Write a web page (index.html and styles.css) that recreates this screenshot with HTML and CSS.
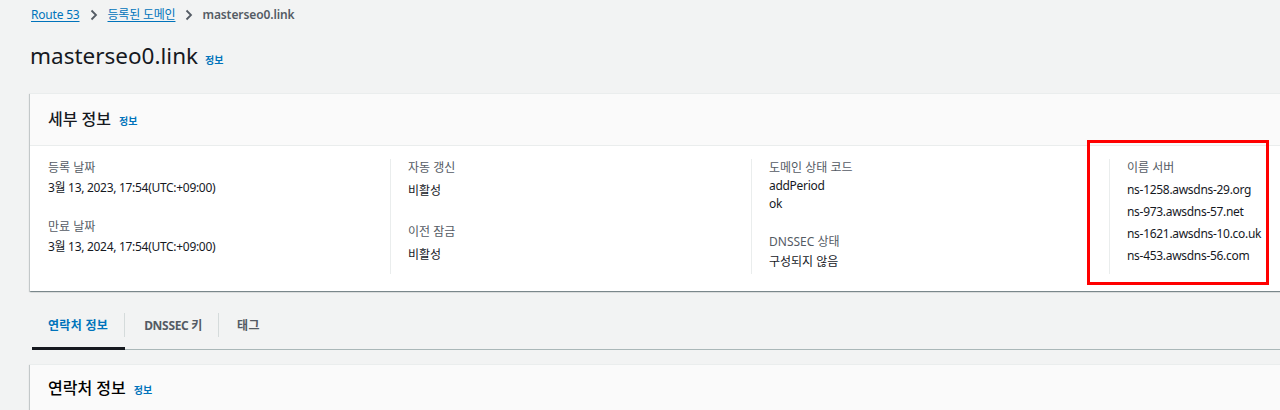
FILE: index.html
```html
<!DOCTYPE html>
<html lang="ko">
<head>
<meta charset="utf-8">
<title>masterseo0.link</title>
<link rel="stylesheet" href="styles.css">
</head>
<body>
<div class="page">
  <nav class="breadcrumb">
    <a class="crumb-link" href="#">Route 53</a>
    <svg class="chev" width="8" height="12" viewBox="0 0 8 12"><path d="M1.5 1.5 L6 6 L1.5 10.5" fill="none" stroke="#545b64" stroke-width="1.8"/></svg>
    <a class="crumb-link" href="#">등록된 도메인</a>
    <svg class="chev" width="8" height="12" viewBox="0 0 8 12"><path d="M1.5 1.5 L6 6 L1.5 10.5" fill="none" stroke="#545b64" stroke-width="1.8"/></svg>
    <span class="crumb-current">masterseo0.link</span>
  </nav>

  <h1 class="page-title">masterseo0.link <a class="info" href="#">정보</a></h1>

  <section class="card">
    <header class="card-header">
      <h2 class="card-title">세부 정보 <a class="info" href="#">정보</a></h2>
    </header>
    <div class="card-body">
      <div class="col col-first">
        <div class="kv">
          <div class="label">등록 날짜</div>
          <div class="value latin">3월 13, 2023, 17:54(UTC:+09:00)</div>
        </div>
        <div class="kv">
          <div class="label">만료 날짜</div>
          <div class="value latin">3월 13, 2024, 17:54(UTC:+09:00)</div>
        </div>
      </div>
      <div class="col col-two">
        <div class="kv">
          <div class="label">자동 갱신</div>
          <div class="value">비활성</div>
        </div>
        <div class="kv">
          <div class="label">이전 잠금</div>
          <div class="value">비활성</div>
        </div>
      </div>
      <div class="col col-three">
        <div class="kv">
          <div class="label">도메인 상태 코드</div>
          <div class="value tight latin">addPeriod</div>
          <div class="value tight latin">ok</div>
        </div>
        <div class="kv">
          <div class="label">DNSSEC 상태</div>
          <div class="value">구성되지 않음</div>
        </div>
      </div>
      <div class="col col-four">
        <div class="kv">
          <div class="label">이름 서버</div>
          <div class="ns-list">
            <div class="value ns latin">ns-1258.awsdns-29.org</div>
            <div class="value ns latin">ns-973.awsdns-57.net</div>
            <div class="value ns latin">ns-1621.awsdns-10.co.uk</div>
            <div class="value ns latin">ns-453.awsdns-56.com</div>
          </div>
        </div>
      </div>
    </div>
  </section>

  <div class="tabs">
    <a class="tab active" href="#">연락처 정보</a>
    <a class="tab second" href="#">DNSSEC 키</a>
    <a class="tab last" href="#">태그</a>
  </div>

  <section class="card card-second">
    <header class="card-header">
      <h2 class="card-title dark">연락처 정보 <a class="info" href="#">정보</a></h2>
    </header>
  </section>
</div>
<div class="highlight"></div>
</body>
</html>
```

FILE: styles.css
```css
html, body {
  margin: 0;
  padding: 0;
}
body {
  background: #f2f3f3;
  font-family: "Noto Sans", "Noto Sans CJK KR", sans-serif;
  color: #16191f;
  width: 1280px;
  height: 410px;
  overflow: hidden;
  position: relative;
}
.page {
  padding-left: 30px;
}
.breadcrumb {
  display: flex;
  align-items: center;
  height: 16px;
  padding-top: 7px;
  font-size: 12px;
  line-height: 16px;
}
.crumb-link {
  color: #0073bb;
  text-decoration: underline;
  text-underline-offset: 2px;
  margin-left: 1px;
  letter-spacing: -0.2px;
}
.chev {
  margin: 0 9px 0 10px;
}
.crumb-current {
  color: #545b64;
  font-weight: 600;
  letter-spacing: -0.1px;
}
.page-title {
  margin: 19px 0 0 0;
  font-size: 22.5px;
  line-height: 28px;
  font-weight: 400;
  color: #16191f;
  display: flex;
  align-items: baseline;
  height: 28px;
}
.info {
  color: #0073bb;
  font-size: 10px;
  line-height: 14px;
  font-weight: 700;
  text-decoration: none;
  margin-left: 7px;
}
.card {
  margin-top: 23px;
  background: #ffffff;
  width: 1400px;
  box-shadow: 0 1px 1px 0 rgba(0, 28, 36, 0.3), 1px 1px 1px 0 rgba(0, 28, 36, 0.15), -1px 1px 1px 0 rgba(0, 28, 36, 0.15);
  border-top: 1px solid #eaeded;
}
.card-header {
  background: #fafafa;
  height: 51px;
  border-bottom: 1px solid #eaeded;
  display: flex;
  align-items: center;
  padding-left: 18px;
}
.card-title {
  margin: 0 0 2px 0;
  font-size: 16px;
  line-height: 20px;
  font-weight: 500;
  color: #16191f;
  display: flex;
  align-items: baseline;
}
.card-title .info {
  margin-left: 8px;
}
.card-body {
  display: grid;
  grid-template-columns: 360px 361px 358px 321px;
  padding: 13px 0 17px 0;
}
.col {
  padding-left: 17px;
  border-left: 1px solid #eaeded;
  min-height: 115px;
}
.col-first {
  border-left-color: transparent;
}
.kv + .kv {
  margin-top: 20px;
}
.label {
  font-size: 12px;
  line-height: 18px;
  color: #545b64;
}
.value {
  font-size: 12px;
  line-height: 20px;
  color: #16191f;
}
.latin {
  letter-spacing: -0.3px;
}
.col-first .value {
  margin-top: 1px;
}
.col-two .value {
  margin-top: 4px;
}
.col-two .kv + .kv {
  margin-top: 22px;
}
.col-three .value.tight {
  line-height: 18px;
}
.col-three .value.tight:first-of-type {
  margin-top: 2px;
}
.col-three .kv + .kv {
  margin-top: 20px;
}
.col-three .kv + .kv .value {
  margin-top: 1px;
}
.ns-list {
  margin-top: 2px;
}
.col-four .value.ns {
  line-height: 22px;
}
.tabs {
  display: flex;
  margin-top: 9px;
  border-bottom: 1px solid #aab7b8;
  width: 1400px;
  margin-left: 2px;
}
.tab {
  position: relative;
  display: flex;
  align-items: center;
  height: 49px;
  margin-bottom: -1px;
  padding: 0 16px 1px 16px;
  font-size: 12px;
  font-weight: 700;
  color: #545b64;
  text-decoration: none;
}
.tab::after {
  content: "";
  position: absolute;
  right: 0;
  top: 13px;
  height: 24px;
  width: 1px;
  background: #d5dbdb;
}
.tab.last::after {
  display: none;
}
.tab.active {
  color: #0073bb;
  padding-right: 17px;
  box-shadow: inset 0 -3px 0 #16191f;
  letter-spacing: 0.3px;
}
.tab.second {
  padding: 0 17px 1px 19px;
  letter-spacing: -0.3px;
}
.tab.last {
  padding-left: 18px;
  letter-spacing: 0.5px;
}
.card-second {
  margin-top: 14px;
}
.card-second .card-header {
  height: 48px;
  align-items: center;
}
.card-title.dark {
  color: #000000;
}
.highlight {
  position: absolute;
  left: 1087px;
  top: 140px;
  width: 182px;
  height: 145px;
  box-sizing: border-box;
  border: 3px solid #ff0000;
}
```
